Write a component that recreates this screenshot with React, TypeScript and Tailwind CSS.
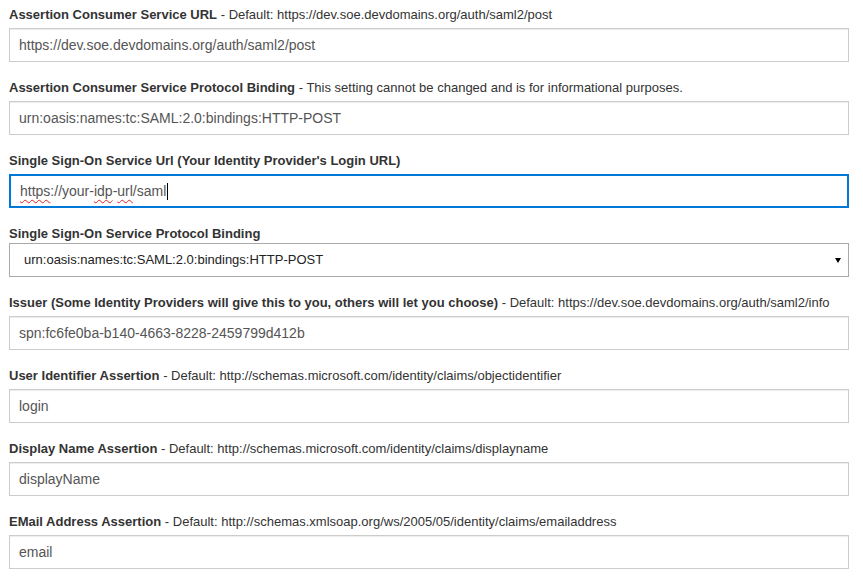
import React from 'react';

type Field = {
  label: string;
  note?: string;
  value: string;
};

const fieldsTop: Field[] = [
  {
    label: 'Assertion Consumer Service URL',
    note: 'Default: https://dev.soe.devdomains.org/auth/saml2/post',
    value: 'https://dev.soe.devdomains.org/auth/saml2/post',
  },
  {
    label: 'Assertion Consumer Service Protocol Binding',
    note: 'This setting cannot be changed and is for informational purposes.',
    value: 'urn:oasis:names:tc:SAML:2.0:bindings:HTTP-POST',
  },
];

const fieldsBottom: Field[] = [
  {
    label: 'Issuer (Some Identity Providers will give this to you, others will let you choose)',
    note: 'Default: https://dev.soe.devdomains.org/auth/saml2/info',
    value: 'spn:fc6fe0ba-b140-4663-8228-2459799d412b',
  },
  {
    label: 'User Identifier Assertion',
    note: 'Default: http://schemas.microsoft.com/identity/claims/objectidentifier',
    value: 'login',
  },
  {
    label: 'Display Name Assertion',
    note: 'Default: http://schemas.microsoft.com/identity/claims/displayname',
    value: 'displayName',
  },
  {
    label: 'EMail Address Assertion',
    note: 'Default: http://schemas.xmlsoap.org/ws/2005/05/identity/claims/emailaddress',
    value: 'email',
  },
];

const Label: React.FC<{ label: string; note?: string; className?: string }> = ({ label, note, className }) => (
  <div className={`h-[18px] leading-[20px] text-[13px] text-[#333] whitespace-nowrap ${className ?? ''}`}>
    <span className="font-bold">{label}</span>
    {note && <span> - {note}</span>}
  </div>
);

const TextField: React.FC<{ field: Field }> = ({ field }) => (
  <div className="mb-[16px]">
    <Label label={field.label} note={field.note} className="mb-[5px]" />
    <input
      readOnly
      value={field.value}
      className="block w-full h-[34px] px-[9px] border border-[#ccc] bg-white text-[14px] text-[#555] shadow-[inset_0_1px_1px_rgba(0,0,0,0.075)] outline-none"
    />
  </div>
);

const squiggle = 'underline decoration-wavy decoration-[#e02020] decoration-1 underline-offset-[3px]';

export default function App() {
  return (
    <div className="bg-white min-h-[579px] pt-[5px] pl-[9px] font-['Liberation_Sans',Arial,sans-serif]">
      <div className="w-[840px]">
        {fieldsTop.map((f) => (
          <TextField key={f.label} field={f} />
        ))}

        <div className="mb-[16px]">
          <Label label="Single Sign-On Service Url (Your Identity Provider's Login URL)" className="mb-[5px]" />
          <div className="flex items-center h-[34px] px-[9px] border-2 border-[#0078d7] bg-white text-[14px] leading-[16px] text-[#555]">
            <span className={squiggle}>https</span>
            <span>://your-</span>
            <span className={squiggle}>idp</span>
            <span>-</span>
            <span className={squiggle}>url</span>
            <span>/saml</span>
            <span className="inline-block w-px h-[17px] bg-black ml-px" />
          </div>
        </div>

        <div className="mb-[16px]">
          <Label label="Single Sign-On Service Protocol Binding" className="mb-[1px]" />
          <div className="flex items-center justify-between h-[34px] pl-[14px] pr-[6px] border border-[#a9a9a9] bg-white text-[13px] text-[#222]">
            <span>urn:oasis:names:tc:SAML:2.0:bindings:HTTP-POST</span>
            <svg width="6" height="5" viewBox="0 0 6 5" className="mr-[1px]">
              <polygon points="0,0 6,0 3,5" fill="#000" />
            </svg>
          </div>
        </div>

        {fieldsBottom.map((f) => (
          <TextField key={f.label} field={f} />
        ))}
      </div>
    </div>
  );
}
